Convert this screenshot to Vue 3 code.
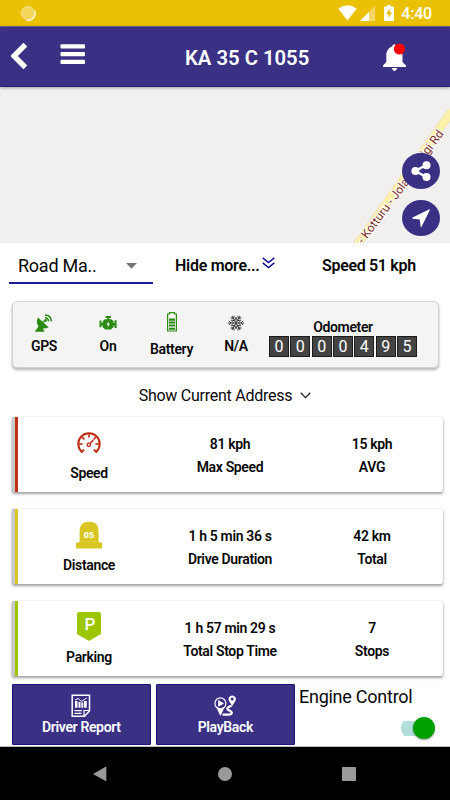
<script setup>
const digits = ['0', '0', '0', '0', '4', '9', '5']
const cards = [
  { kind: 'speed', label: 'Speed', color: '#bd3118', a: '81 kph', aLabel: 'Max Speed', b: '15 kph', bLabel: 'AVG' },
  { kind: 'distance', label: 'Distance', color: '#d8c723', a: '1 h 5 min 36 s', aLabel: 'Drive Duration', b: '42 km', bLabel: 'Total' },
  { kind: 'parking', label: 'Parking', color: '#9bc600', a: '1 h 57 min 29 s', aLabel: 'Total Stop Time', b: '7', bLabel: 'Stops' },
]
const ticks = Array.from({ length: 24 }, (_, i) => i * 15)
const arms = [0, 60, 120, 180, 240, 300]
const gaugeTicks = [-90, -45, 0, 45, 90]
</script>

<template>
  <div class="screen">
    <div class="status">
      <svg class="spinner" width="16" height="16" viewBox="0 0 16 16">
        <circle cx="8" cy="8" r="6.6" fill="#f1d65a" />
        <path d="M14.6 5.5A7 7 0 0 1 6 15" fill="none" stroke="#fff9de" stroke-width="1.3" />
        <g stroke="#f8e9a5" stroke-width=".8">
          <path v-for="t in ticks" :key="t" d="M8 .7V2.4" :transform="`rotate(${t} 8 8)`" />
        </g>
      </svg>
      <svg class="wifi" width="19" height="16" viewBox="0 0 19 16"><path d="M.3 3.7Q9.5-3 18.7 3.7L9.5 15.5Z" fill="#fff" /></svg>
      <svg class="cell" width="15" height="15" viewBox="0 0 15 15"><path d="M15 0V15H0Z" fill="#f3d869" /><path d="M9 6V15H0Z" fill="#fff" /></svg>
      <svg class="charge" width="10" height="16" viewBox="0 0 10 16"><path d="M3 0H7V1.5H9Q10 1.5 10 2.5V15Q10 16 9 16H1Q0 16 0 15V2.5Q0 1.5 1 1.5H3Z" fill="#fff" /><path d="M5.8 3.8L2.2 9H4.5V13L8 7.6H5.8Z" fill="#e3b900" /></svg>
      <span class="clock">4:40</span>
    </div>

    <header class="bar">
      <svg class="back" width="18" height="28" viewBox="0 0 18 28"><path d="M14.4 2.6L3 14L14.4 25.4" fill="none" stroke="#fff" stroke-width="5.4" /></svg>
      <svg class="menu" width="26" height="22" viewBox="0 0 26 22" fill="#fff"><rect x=".5" y=".2" width="24.5" height="4.2" rx="1" /><rect x=".5" y="8" width="24.5" height="4.2" rx="1" /><rect x=".5" y="15.8" width="24.5" height="4.2" rx="1" /></svg>
      <h1>KA 35 C 1055</h1>
      <svg class="bell" width="26" height="30" viewBox="0 0 26 30">
        <path d="M9.9 3.5Q12.3 -1 14.7 3.5C19 5 20.5 8.5 20.5 13V19L24 22.4V24H1V22.4L4.3 19V13C4.3 8.5 6 5 9.9 3.5Z" fill="#fff" />
        <path d="M9.7 25H15.3Q14.6 28 12.5 28Q10.4 28 9.7 25Z" fill="#fff" />
        <circle cx="17.4" cy="6" r="5.6" fill="#f00" />
      </svg>
    </header>

    <div class="map">
      <svg class="road" width="450" height="156" viewBox="0 0 450 156">
        <path d="M352 165L452 24" stroke="#efe2b8" stroke-width="9" />
        <path d="M352 165L452 24" stroke="#fdf0a8" stroke-width="7.4" />
        <text transform="translate(359.8 162) rotate(-53.2)">i - Kotturu - Jola</text>
        <text transform="translate(424.5 73) rotate(-53.2)">ligi Rd</text>
      </svg>
      <div class="floating">
        <button class="round">
          <svg width="20" height="20" viewBox="0 0 20 20"><path d="M15.5 4L4 10L15.5 16" fill="none" stroke="#fff" stroke-width="2.4" /><circle cx="4.4" cy="10" r="4" fill="#fff" /><circle cx="15.5" cy="4.2" r="4" fill="#fff" /><circle cx="15.5" cy="16" r="4" fill="#fff" /></svg>
        </button>
        <button class="round">
          <svg width="20" height="20" viewBox="0 0 20 20"><path d="M18.4 1.2Q19.2 1 18.8 2L10.7 18.6Q9.9 19.8 9.6 18.4L8.8 11.6L1.8 10.8Q.6 10.4 1.6 9.6Z" fill="#fff" /></svg>
        </button>
      </div>
    </div>

    <div class="options">
      <div class="select">
        <span>Road Ma..</span>
        <svg width="11" height="6" viewBox="0 0 11 6"><path d="M0 0H11L5.5 5.7Z" fill="#747474" /></svg>
      </div>
      <div class="hide">
        <span>Hide more...</span>
        <svg width="13" height="12" viewBox="0 0 13 12"><path d="M.7 .8L6.5 5.6L12.3 .8M.7 5.8L6.5 10.6L12.3 5.8" fill="none" stroke="#15128f" stroke-width="1.5" /></svg>
      </div>
      <div class="now">Speed 51 kph</div>
    </div>

    <section class="vitals">
      <div class="vital">
        <svg width="18" height="18" viewBox="0 0 18 18">
          <path d="M3 3.6L13.6 13.2C9.6 15.5 5.5 14.4 3.4 12.1C1.4 9.8 1.4 6.7 3 3.6Z" fill="#298b12" />
          <path d="M4.5 12L1 17H8.5L6 12ZM7.5 8.5L11 5.5" fill="#298b12" stroke="#298b12" stroke-width="1.3" />
          <circle cx="10.6" cy="6.6" r="1.4" fill="#298b12" />
          <path d="M10 3.7Q13.3 3.8 13.6 7.4M10 .9Q16 1 16.4 7.4" fill="none" stroke="#298b12" stroke-width="1.5" />
        </svg>
        <span>GPS</span>
      </div>
      <div class="vital">
        <svg width="18" height="18" viewBox="0 0 18 18" fill="#298b12">
          <path d="M6.6 2H11.9V3.9H10.3V5.2H12.3L14.6 7.2V9H15.5V6.2H17.6V14H15.5V11.4H14.6V13L12 15.6H6.4L3.6 13.2V11.2H2.4V13.2H.5V6.6H2.4V9H3.6V7.2L5.9 5.2H8.2V3.9H6.6Z" />
          <path d="M9.8 7L7.4 10.7H9L8.5 13.8L11 9.8H9.5Z" fill="#f4f4f4" />
        </svg>
        <span>On</span>
      </div>
      <div class="vital low">
        <svg width="12" height="20" viewBox="0 0 12 20">
          <path d="M3.5 .6H8.5V2H10.4V19H1.6V2H3.5Z" fill="none" stroke="#298b12" stroke-width="1.2" />
          <path d="M3 6.5H9V8.7H3ZM3 9.6H9V11.6H3ZM3 12.6H9V14.6H3ZM3 15.7H9V17.7H3Z" fill="#298b12" />
        </svg>
        <span>Battery</span>
      </div>
      <div class="vital">
        <svg width="18" height="18" viewBox="0 0 18 18" fill="none" stroke="#424242" stroke-width="1">
          <path v-for="a in arms" :key="a" d="M9 9V.8M6.9 1.8L9 4L11.1 1.8M6.4 4L9 6.6L11.6 4" :transform="`rotate(${a + 30} 9 9)`" />
        </svg>
        <span>N/A</span>
      </div>
      <div class="odometer">
        <span>Odometer</span>
        <div class="digits"><b v-for="(d, i) in digits" :key="i">{{ d }}</b></div>
      </div>
    </section>

    <div class="address">
      <span>Show Current Address</span>
      <svg width="11" height="7" viewBox="0 0 11 7"><path d="M.8 .8L5.5 5.6L10.2 .8" fill="none" stroke="#222" stroke-width="1.3" /></svg>
    </div>

    <section class="cards">
      <article v-for="c in cards" :key="c.kind" class="card" :class="c.kind">
        <div class="metric">
          <svg v-if="c.kind === 'speed'" width="26" height="30" viewBox="0 0 26 30" fill="none" stroke="#bc2a14">
            <path d="M5.6 24.6A10.7 10.7 0 1 1 20.4 24.6" stroke-width="2" />
            <path d="M5.1 25.6L8.1 22.6M20.9 25.6L17.9 22.6" stroke-width="1.9" />
            <path v-for="g in gaugeTicks" :key="g" d="M13 7.2V10.6" stroke-width="1.6" :transform="`rotate(${g} 13 17)`" />
            <circle cx="12.8" cy="17.8" r="1.7" stroke-width="1.3" />
            <path d="M13.8 16.7L17.3 13" stroke-width="1.6" />
          </svg>
          <svg v-else-if="c.kind === 'distance'" width="26" height="30" viewBox="0 0 26 30">
            <path d="M3.6 22.8V12Q3.6 2.7 13 2.7Q22.6 2.7 22.6 12V22.8Z" :fill="c.color" />
            <path d="M0 23.4H3V24H23V23.4H26V29.5H0Z" :fill="c.color" />
            <path d="M3 22.5H23V24.5H3Z" :fill="c.color" />
            <text x="13" y="18.7" text-anchor="middle">05</text>
          </svg>
          <svg v-else width="26" height="30" viewBox="0 0 26 30">
            <path d="M3 1H23Q25 1 25 3V23L13 30L1 23V3Q1 1 3 1Z" :fill="c.color" />
            <text class="p" x="14" y="19" text-anchor="middle">P</text>
          </svg>
          <span>{{ c.label }}</span>
        </div>
        <div class="pair"><span>{{ c.a }}</span><span>{{ c.aLabel }}</span></div>
        <div class="pair"><span>{{ c.b }}</span><span>{{ c.bLabel }}</span></div>
      </article>
    </section>

    <footer class="actions">
      <button class="action">
        <svg width="20" height="24" viewBox="0 0 20 24">
          <path d="M1.2 1.2H18.5V17L13.5 22.3H1.2Z" fill="none" stroke="#fff" stroke-width="1.5" />
          <path d="M18.5 16.5H13V22" fill="none" stroke="#fff" stroke-width="1.2" />
          <path d="M4 7H6.5V13.7H4ZM7.5 8H9.5V13.7H7.5ZM10.3 8.5H12.2V13.7H10.3ZM13 7H15.7V13.7H13ZM3.5 16H11V17.3H3.5ZM3.5 18.8H10.5V20.1H3.5Z" fill="#fff" />
          <path d="M4 6L7 4.5L10.5 7.5L15.6 4" fill="none" stroke="#fff" />
        </svg>
        <span>Driver Report</span>
      </button>
      <button class="action play">
        <svg width="24" height="24" viewBox="0 0 24 24">
          <path d="M7.4 22L3.4 13.5H11.4Z" fill="#fff" />
          <circle cx="7.4" cy="9.4" r="5.5" fill="#3a3185" stroke="#fff" stroke-width="1.2" /><path d="M5.2 6.1V12.7L11 9.4Z" fill="#fff" />
          <path d="M19.2 12L16.2 7.2A3.6 3.6 0 1 1 22.2 7.2Z" fill="#fff" /><circle cx="19.2" cy="5.1" r="1.5" fill="#3a3185" />
          <path d="M9.5 20.7H16Q20.6 20 17.8 17.4L14.6 15.4Q13.4 13.2 18.7 11.8" fill="none" stroke="#fff" stroke-width="2.2" />
        </svg>
        <span>PlayBack</span>
      </button>
      <div class="engine">
        <span>Engine Control</span>
        <div class="toggle"><i></i></div>
      </div>
    </footer>

    <nav class="nav">
      <svg width="14" height="16" viewBox="0 0 14 16"><path d="M0 8L12.6 .8Q13.3 .6 13.3 1.3V14.6Q13.3 15.4 12.6 15.1Z" fill="#999" /></svg>
      <svg width="14" height="14" viewBox="0 0 14 14"><circle cx="7" cy="7" r="7" fill="#999" /></svg>
      <svg width="14" height="14" viewBox="0 0 14 14"><rect width="14" height="14" rx=".6" fill="#999" /></svg>
    </nav>
  </div>
</template>

<style>
body { margin: 0; background: #fff; }
</style>

<style scoped>
* { box-sizing: border-box; }
svg { display: block; flex: none; }
button { border: 0; padding: 0; margin: 0; font: inherit; color: inherit; letter-spacing: inherit; }
.screen { width: 450px; height: 800px; display: flex; flex-direction: column; overflow: hidden; background: #fff; color: #080808; font-family: Roboto, sans-serif; font-weight: 600; white-space: nowrap; }
.screen > * { flex: none; }

.status { height: 26px; background: #eac103; display: flex; align-items: flex-start; padding: 5px 18px 0 20px; color: #fff; }
.wifi { margin-left: 302px; }
.cell { margin: 1px 0 0 3px; }
.charge { margin-left: 9px; }
.clock { margin-left: auto; font-size: 16px; letter-spacing: -.2px; line-height: 18px; font-weight: 500; }

.bar { height: 61px; background: #3a3185; border-top: 1px solid #71607a; border-bottom: 1px solid #2a207f; display: flex; align-items: flex-start; color: #fff; position: relative; z-index: 1; box-shadow: 0 1px 3px rgba(0, 0, 0, .35); padding-left: 11px; }
.back { margin-top: 15px; }
.menu { margin: 17px 0 0 31px; }
h1 { margin: 19px 0 0 99px; width: 124px; font-size: 20.3px; line-height: 24px; font-weight: 600; }
.bell { margin: 16px 0 0 73px; }

.map { height: 156px; background: #f1f0ef; position: relative; }
.road text { font-size: 12px; font-weight: 400; fill: #7b3026; stroke: #fff; stroke-width: 2px; paint-order: stroke; }
.floating { position: absolute; right: 10px; top: 66px; display: flex; flex-direction: column; gap: 11px; }
.round { width: 38px; height: 36px; border-radius: 50%; background: #3a3185; display: grid; place-items: center; }

.options { height: 58px; display: flex; align-items: flex-start; padding-left: 9px; }
.select { width: 144px; height: 41px; border-bottom: 2px solid #1d1b92; display: flex; align-items: flex-start; justify-content: space-between; padding: 11px 16px 0 9px; font-size: 18px; letter-spacing: -.25px; line-height: 24px; font-weight: 400; }
.select svg { margin-top: 9px; }
.hide { margin: 12px 0 0 22px; width: 147px; display: flex; font-size: 16px; letter-spacing: -.28px; line-height: 21px; }
.hide span { width: 86.5px; }
.hide svg { margin-top: 2px; }
.now { margin-top: 12px; font-size: 16px; letter-spacing: -.32px; line-height: 21px; }

.vitals { width: 427px; height: 67px; margin-left: 12px; background: #f4f4f4; border: 1px solid #d2d2d2; border-radius: 5px; box-shadow: 0 2px 3px rgba(0, 0, 0, .3); display: flex; letter-spacing: -.35px; }
.vital { width: 64px; display: flex; flex-direction: column; align-items: center; padding-top: 12px; font-size: 14px; line-height: 18px; }
.vital:first-child { width: 63px; padding-right: 1px; }
.vital span { margin-top: 5px; }
.vital.low { padding-top: 10px; padding-right: 1px; }
.vital.low span { margin-top: 8px; }
.odometer { margin-left: 1px; width: 148px; display: flex; flex-direction: column; align-items: center; padding-top: 16px; font-size: 14px; line-height: 18px; }
.digits { display: flex; gap: 1.5px; letter-spacing: 0; }
.digits b { width: 19.85px; height: 21px; background: #434343; border: 1px solid #1b1b1b; color: #fff; font-size: 16px; font-weight: 400; line-height: 20px; text-align: center; }

.address { height: 49px; display: flex; justify-content: center; align-items: flex-start; gap: 8px; padding: 18px 0 0; font-size: 16px; letter-spacing: -.25px; line-height: 20px; font-weight: 400; }
.address svg { margin-top: 6px; }

.cards { display: flex; flex-direction: column; gap: 17px; padding-left: 12px; height: 267px; }
.card { width: 431px; height: 75px; background: #fff; border-left: 3px solid #c8c8c8; border-radius: 2px; box-shadow: 0 2px 3px rgba(0, 0, 0, .36), 0 0 1px rgba(0, 0, 0, .35); display: grid; grid-template-columns: 145px 140px 144px; font-size: 14px; letter-spacing: -.35px; }
.metric { border-left: 3px solid; display: flex; flex-direction: column; align-items: center; padding-top: 10px; }
.speed .metric { border-color: #bd3118; }
.distance .metric { border-color: #d8c723; }
.parking .metric { border-color: #9bc600; }
.metric span { margin-top: 7px; line-height: 18px; color: #080808; }
.metric text { font: bold 9px "Open Sans", sans-serif; fill: #fff; letter-spacing: 0; }
.metric text.p { font: 500 17px Roboto, sans-serif; }
.pair { display: flex; flex-direction: column; align-items: center; gap: 5px; padding-top: 18px; line-height: 18px; }

.actions { height: 63px; border-bottom: 1px solid #bbb; display: flex; align-items: flex-start; padding-left: 11.7px; }
.action { width: 139.3px; height: 61px; background: #3a3185; border: 1px solid #17127b; border-radius: 1px; color: #fff; display: flex; flex-direction: column; align-items: center; padding-top: 9px; font-size: 14px; letter-spacing: -.35px; line-height: 18px; }
.play { margin-left: 4.7px; }
.engine { width: 136px; margin-left: 4px; display: flex; flex-direction: column; font-size: 18px; letter-spacing: -.25px; line-height: 25px; font-weight: 400; }
.toggle { width: 34px; height: 22px; align-self: flex-end; margin: 8px 0 0; display: flex; justify-content: flex-end; align-items: center; background: linear-gradient(#b2dfdb, #b2dfdb) 0 4px / 26px 15px no-repeat; border-radius: 11px; }
.toggle i { width: 22px; height: 22px; border-radius: 50%; background: #00a000; box-shadow: 0 1px 2px rgba(0, 0, 0, .4); }

.nav { height: 53px; background: #000; display: flex; justify-content: center; align-items: center; gap: 110.5px; padding-right: 1px; }
</style>
